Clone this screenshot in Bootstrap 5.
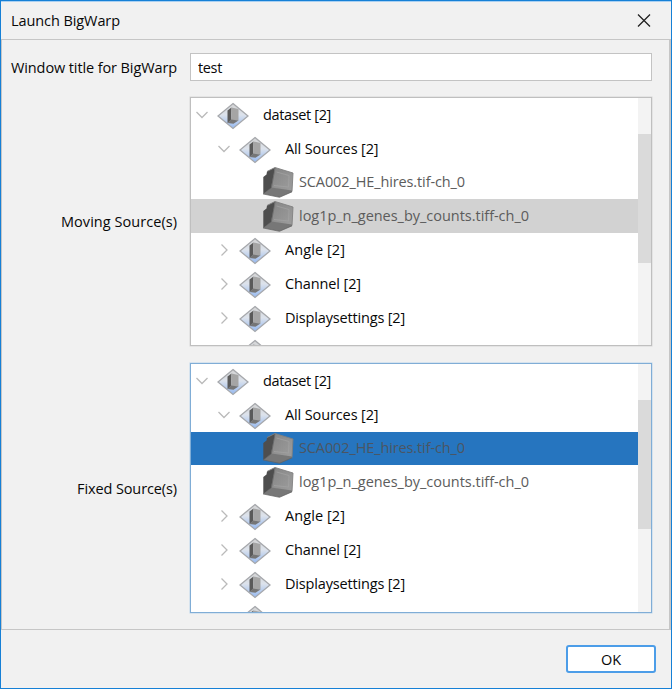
<!DOCTYPE html>
<html lang="en">
<head>
<meta charset="utf-8">
<title>Launch BigWarp</title>
<link href="https://cdn.jsdelivr.net/npm/bootstrap@5.3.0/dist/css/bootstrap.min.css" rel="stylesheet">
<style>
body{font-family:"Open Sans","Noto Sans",sans-serif;font-size:14.5px;font-stretch:94%;line-height:20px;color:#080808;overflow:hidden}
.dialog{width:672px;height:689px;background:#f1f1f1;border:1px solid #1680d6;box-shadow:inset 0 1px #a9d0f2}
.titlebar{height:38px;padding:1px 19px 0 10px}
.form-pane{height:591px;border:1px solid #c6c6c6;border-right-width:2px;padding:13px 17px 0 9px}
.field-label{width:166px;margin-right:13px;padding-top:1px;text-align:right}
.form-control.title-input{width:462px;height:28px;min-height:0;border:1px solid #c3c3c3;padding:1px 7px 0;font-size:14.5px;line-height:20px;color:#080808;letter-spacing:-.35px}
.tree{width:462px;height:250px;border:1px solid #bfbfbf;background:#fff;box-shadow:0 0 0 .5px #d8d8d8}
.tree.active-tree{border-color:#80add6;box-shadow:0 0 0 .5px #bcd6ec}
.tree-row{height:33.75px;padding-left:4px;padding-top:1px}
.level-1{padding-left:26px}
.level-2{padding-left:71px;padding-top:0;color:#5c5c5c}
.picked{background:#d2d2d2}
.picked-focus{background:#2675bf;color:#4b5563}
.chev{width:14px;height:14px;margin-right:8px}
.level-1 .chev{margin-left:-.5px;margin-right:8.5px}
.node-icon{width:32px;height:28px;margin-right:14px;margin-top:2px}
.cube-icon{width:32px;height:31px;margin-right:5px}
.track{width:13px;background:#f3f3f3;padding-top:36px}
.thumb{height:129px;background:#dadada}
.btn.ok-btn{width:90px;height:28px;padding:1px 0 0;border:2px solid #4c9de8;border-radius:3px;background:#fff;font-size:14.5px;line-height:20px;color:#080808}
.actions{padding:15px 15px 0 0}
.fit{display:inline-block;white-space:nowrap}
.moving{height:249px;margin-bottom:17px}
.moving .tree{height:249px}
</style>
</head>
<body>
<svg width="0" height="0" class="position-absolute" aria-hidden="true">
<defs>
<linearGradient id="gd" x1="0" y1="0" x2="0" y2="1"><stop offset="0" stop-color="#d2d2d2"/><stop offset=".45" stop-color="#dde3ec"/><stop offset="1" stop-color="#94b8f0"/></linearGradient>
<linearGradient id="gf" x1="0" y1="0" x2="1" y2="1"><stop offset="0" stop-color="#858585"/><stop offset="1" stop-color="#9d9d9d"/></linearGradient>
</defs>
<symbol id="down" viewBox="0 0 14 14"><path d="M1.500 4 7 9.500 12.500 4" fill="none" stroke="#bababa" stroke-width="1.300"/></symbol>
<symbol id="right" viewBox="0 0 14 14"><path d="M4.500 1.500 10 7 4.500 12.500" fill="none" stroke="#bababa" stroke-width="1.300"/></symbol>
<symbol id="node" viewBox="0 0 32 28"><path d="M16 1.500 31 14 16 26.500 1 14Z" fill="url(#gd)" stroke="#a6a8ac" stroke-width="1.300"/><path d="M10.500 8.500 14.500 5.500 14 18 10.500 21Z" fill="#5a5a5a"/><path d="M14.500 5.500 21.500 7V18.500L14 18Z" fill="#a5a5a5"/><path d="M10.500 21 14 17.500 21.500 18.500 16.500 21.800Z" fill="#757575"/></symbol>
<symbol id="cube" viewBox="0 0 32 31"><path d="M1.300 10 4.500 7.500 5 4.500 13 .500 10 21 1.300 27Z" fill="#4e4e4e"/><path d="M13 .500 31 6 30 24.500 9 21Z" fill="url(#gf)"/><path d="M1.300 27 9.500 20.500 30 23.500V25L17.500 30.300Z" fill="#777"/><path d="M14.500 5 27 8.500 26.500 20 12 18.500" fill="none" stroke="#a3a3a3" stroke-width=".7"/><path d="M5 4.500 13 .500 31 6 30 24.500" fill="none" stroke="#808080" stroke-width=".9"/><path d="M1.300 27 17.500 30.300 30 24.800M13 1 9.500 20.500 1.300 27" fill="none" stroke="#626262" stroke-width=".7"/></symbol>
</svg>
<main class="dialog">
<header class="titlebar d-flex align-items-center justify-content-between"><span class="fit" data-w="109">Launch BigWarp</span>
<svg width="16" height="16" viewBox="0 0 16 16" role="button" aria-label="Close"><path d="M2 1.500 14 13.500M14 1.500 2 13.500" stroke="#222" stroke-width="1.300"/></svg></header>
<section class="form-pane">
<div class="d-flex align-items-center mb-3"><label class="field-label" for="wt"><span class="fit" data-w="166">Window title for BigWarp</span></label><input id="wt" class="form-control title-input rounded-0" value="test"></div>
<div class="moving d-flex align-items-center"><div class="field-label"><span class="fit" data-w="116">Moving Source(s)</span></div>
<div class="tree d-flex overflow-hidden"><div class="flex-grow-1">
<div class="tree-row d-flex align-items-center"><svg class="chev"><use href="#down"/></svg><svg class="node-icon"><use href="#node"/></svg><span class="fit" data-w="68">dataset [2]</span></div>
<div class="tree-row level-1 d-flex align-items-center"><svg class="chev"><use href="#down"/></svg><svg class="node-icon"><use href="#node"/></svg><span class="fit" data-w="93.5">All Sources [2]</span></div>
<div class="tree-row level-2 d-flex align-items-center"><svg class="cube-icon"><use href="#cube"/></svg><span class="fit" data-w="166">SCA002_HE_hires.tif-ch_0</span></div>
<div class="tree-row level-2 picked d-flex align-items-center"><svg class="cube-icon"><use href="#cube"/></svg><span class="fit" data-w="230">log1p_n_genes_by_counts.tiff-ch_0</span></div>
<div class="tree-row level-1 d-flex align-items-center"><svg class="chev"><use href="#right"/></svg><svg class="node-icon"><use href="#node"/></svg><span class="fit" data-w="60">Angle [2]</span></div>
<div class="tree-row level-1 d-flex align-items-center"><svg class="chev"><use href="#right"/></svg><svg class="node-icon"><use href="#node"/></svg><span class="fit" data-w="76">Channel [2]</span></div>
<div class="tree-row level-1 d-flex align-items-center"><svg class="chev"><use href="#right"/></svg><svg class="node-icon"><use href="#node"/></svg><span class="fit" data-w="120">Displaysettings [2]</span></div>
<div class="tree-row level-1 d-flex align-items-center"><span class="chev"></span><svg class="node-icon"><use href="#node"/></svg></div>
</div><div class="track"><div class="thumb"></div></div></div></div>
<div class="d-flex align-items-center"><div class="field-label"><span class="fit" data-w="100">Fixed Source(s)</span></div>
<div class="tree active-tree d-flex overflow-hidden"><div class="flex-grow-1">
<div class="tree-row d-flex align-items-center"><svg class="chev"><use href="#down"/></svg><svg class="node-icon"><use href="#node"/></svg><span class="fit" data-w="68">dataset [2]</span></div>
<div class="tree-row level-1 d-flex align-items-center"><svg class="chev"><use href="#down"/></svg><svg class="node-icon"><use href="#node"/></svg><span class="fit" data-w="93.5">All Sources [2]</span></div>
<div class="tree-row level-2 picked-focus d-flex align-items-center"><svg class="cube-icon"><use href="#cube"/></svg><span class="fit" data-w="166">SCA002_HE_hires.tif-ch_0</span></div>
<div class="tree-row level-2 d-flex align-items-center"><svg class="cube-icon"><use href="#cube"/></svg><span class="fit" data-w="230">log1p_n_genes_by_counts.tiff-ch_0</span></div>
<div class="tree-row level-1 d-flex align-items-center"><svg class="chev"><use href="#right"/></svg><svg class="node-icon"><use href="#node"/></svg><span class="fit" data-w="60">Angle [2]</span></div>
<div class="tree-row level-1 d-flex align-items-center"><svg class="chev"><use href="#right"/></svg><svg class="node-icon"><use href="#node"/></svg><span class="fit" data-w="76">Channel [2]</span></div>
<div class="tree-row level-1 d-flex align-items-center"><svg class="chev"><use href="#right"/></svg><svg class="node-icon"><use href="#node"/></svg><span class="fit" data-w="120">Displaysettings [2]</span></div>
<div class="tree-row level-1 d-flex align-items-center"><span class="chev"></span><svg class="node-icon"><use href="#node"/></svg></div>
</div><div class="track"><div class="thumb"></div></div></div></div>
</section>
<footer class="actions d-flex justify-content-end"><button class="btn ok-btn" type="button"><span class="fit" data-w="20">OK</span></button></footer>
</main>
<script src="https://cdn.jsdelivr.net/npm/bootstrap@5.3.0/dist/js/bootstrap.bundle.min.js"></script>
<script>
// Adjust the tracking so each label occupies its intended width.
document.querySelectorAll('.fit').forEach(function(el){
  var s=(el.dataset.w-el.getBoundingClientRect().width)/el.textContent.length;
  el.style.letterSpacing=s+'px';
});
</script>
</body>
</html>
